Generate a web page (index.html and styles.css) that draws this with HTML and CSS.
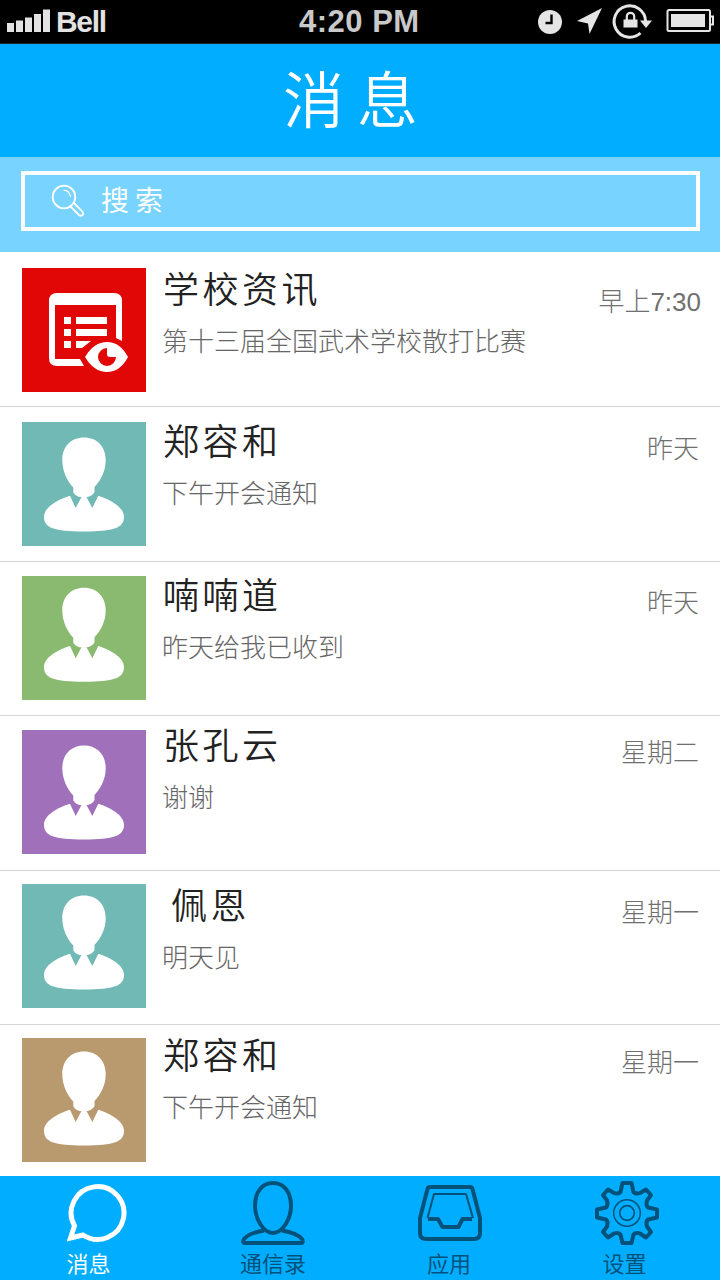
FILE: index.html
```html
<!DOCTYPE html>
<html lang="zh-CN">
<head>
<meta charset="utf-8">
<title>消息</title>
<link rel="stylesheet" href="styles.css">
</head>
<body>
<svg class="defs" width="0" height="0">
  <symbol id="person" viewBox="0 0 124 124" overflow="visible">
    <path fill="#fff" d="M62 15.500C49 15.500 40.300 24.500 40.300 38C40.300 49 45 59 51.300 65.500V70.500Q54 75 60.500 75.300H63.500Q70 75 72.500 70V65C79 58 83.700 49 83.700 38C83.700 24.500 75 15.500 62 15.500Z"/>
    <path fill="#fff" d="M48 73.700C36 77.500 22 85 22 94.700C22 106 32 109.400 62 109.400C92 109.400 102 106 102 94.700C102 85 88 77.500 76.300 73.700L70.300 86L64.500 75H59.500L53.700 86Z"/>
  </symbol>
</svg>
<div class="screen">
  <div class="status">
    <svg class="signal" width="46" height="26" viewBox="0 0 46 26" fill="#e2e2e2"><path d="M1 17h7v9H1zM10 14.500h7V26h-7zM19 11.500h7V26h-7zM28 8h7v18h-7zM37 3.500h7V26h-7z"/></svg>
    <span class="carrier">Bell</span>
    <span class="clock">4:20 PM</span>
    <svg class="indicators" width="190" height="43" viewBox="530 0 190 43">
      <circle cx="550" cy="22" r="12" fill="#e5e5e5"/>
      <path d="M551.500 14.500v8.500H545.500" fill="none" stroke="#000" stroke-width="2.400"/>
      <path d="M602 8L589.500 34L588 23.500L577 21Z" fill="#e5e5e5"/>
      <path d="M640.500 33A15.700 15.700 0 1 1 645.500 21" fill="none" stroke="#e5e5e5" stroke-width="3"/>
      <path d="M640 20.500h12l-6 7.500zM623.500 19.500h14v8h-14z" fill="#e5e5e5"/>
      <path d="M626.800 20.500v-4a3.700 3.700 0 0 1 7.400 0v4" fill="none" stroke="#e5e5e5" stroke-width="2.200"/>
      <rect x="667.500" y="10" width="42.500" height="21" rx="1.500" fill="none" stroke="#e5e5e5" stroke-width="2"/>
      <path d="M671 14h34v13h-34z" fill="#e5e5e5"/>
      <path d="M710 16.500h3v8h-3" fill="none" stroke="#e5e5e5" stroke-width="2"/>
    </svg>
  </div>
  <header class="header"><h1 class="title">消息</h1></header>
  <div class="search">
    <div class="search-box">
      <svg width="34" height="34" viewBox="0 0 34 34" fill="none" stroke="#fff" stroke-width="1.800"><circle cx="13" cy="13" r="11.300"/><path d="M12.500 6.200Q18.500 6.500 19.500 13" stroke-width="1.200"/><path d="M19.500 22.500L28 31Q30 32.600 31.600 31Q33 29.300 31.300 27.500L23 19"/></svg>
      <span class="search-text">搜索</span>
    </div>
  </div>
  <main class="list">
    <article class="row row-1">
      <svg class="avatar red" viewBox="0 0 124 124">
        <path fill="#fff" fill-rule="evenodd" d="M27 33Q27 25 35 25H92Q100 25 100 33V73L94 70V37H33V91H58L62 98H35Q27 98 27 90Z"/>
        <path fill="#fff" d="M42 49h7v7h-7zM54 49h31v7H54zM42 61h7v7h-7zM54 61h31v7H54zM42 73h7v7h-7zM54 73H69L60 80H54z"/>
        <path fill="#fff" d="M63 89Q72 74 85 74Q98 74 106 89Q98 104 85 104Q72 104 63 89Z"/>
        <path fill="#e20707" d="M85 80A9 9 0 1 0 94 89H88Q85 89 85 86Z"/>
      </svg>
      <div class="body"><h2 class="name">学校资讯</h2><p class="text">第十三届全国武术学校散打比赛</p></div>
      <time class="time">早上7:30</time>
    </article>
    <article class="row row-2">
      <svg class="avatar teal" viewBox="0 0 124 124"><use href="#person" width="124" height="124"/></svg>
      <div class="body"><h2 class="name">郑容和</h2><p class="text">下午开会通知</p></div>
      <time class="time">昨天</time>
    </article>
    <article class="row row-3">
      <svg class="avatar green" viewBox="0 3.700 124 124"><use href="#person" width="124" height="124"/></svg>
      <div class="body"><h2 class="name">喃喃道</h2><p class="text">昨天给我已收到</p></div>
      <time class="time">昨天</time>
    </article>
    <article class="row row-4">
      <svg class="avatar purple" viewBox="0 0 124 124"><use href="#person" width="124" height="124"/></svg>
      <div class="body"><h2 class="name">张孔云</h2><p class="text">谢谢</p></div>
      <time class="time">星期二</time>
    </article>
    <article class="row row-5">
      <svg class="avatar teal" viewBox="0 4 124 124"><use href="#person" width="124" height="124"/></svg>
      <div class="body"><h2 class="name indented">佩恩</h2><p class="text">明天见</p></div>
      <time class="time">星期一</time>
    </article>
    <article class="row row-6">
      <svg class="avatar tan" viewBox="0 2 124 124"><use href="#person" width="124" height="124"/></svg>
      <div class="body"><h2 class="name">郑容和</h2><p class="text">下午开会通知</p></div>
      <time class="time">星期一</time>
    </article>
  </main>
  <nav class="tabs">
    <a class="tab active">
      <svg width="80" height="66" viewBox="48.500 1180 80 66" fill="none" stroke="currentColor" stroke-width="5"><path d="M74 1225.800A26.400 26.400 0 1 1 82.500 1235L70 1238Z"/></svg>
      <span>消息</span>
    </a>
    <a class="tab">
      <svg width="64" height="66" viewBox="0 0 64 66" fill="none" stroke="currentColor" stroke-width="4" stroke-linejoin="round"><path d="M32 3C21 3 14 12 14 26C14 38 22 53 32 53C42 53 50 38 50 26C50 12 43 3 32 3Z"/><path d="M23 50.500Q8 53 3 59Q1 63 4 63H60Q63 63 61 59Q56 53 41 50.500"/></svg>
      <span>通信录</span>
    </a>
    <a class="tab">
      <svg class="inbox" width="64" height="66" viewBox="0 0 64 66" fill="none" stroke="currentColor" stroke-width="4" stroke-linejoin="round"><path d="M12 7H52Q54 7 54.500 9L62 38V53Q62 59 56 59H8Q2 59 2 53V38L9.500 9Q10 7 12 7Z"/><path d="M10 39H20L24.500 47H40.500L44.500 39H54"/><path d="M9.500 38L16 14H48L55 38" stroke-width="2"/></svg>
      <span>应用</span>
    </a>
    <a class="tab">
      <svg class="gear" width="64" height="66" viewBox="0 0 64 66" fill="none" stroke="currentColor" stroke-width="4" stroke-linejoin="round"><path d="M27.500 3H36.500L38.500 12Q41 14.500 45 13L51 9.500L56 15L52 20.500Q50.500 25 53 27.500L62 29.500V37.500L53 39.500Q50.500 42 52 46.500L56 52L51 57.500L45 53.500Q41 52 38.500 54.500L36.500 63H27.500L25.500 54.500Q23 52 19 53.500L13 57.500L8 52L12 46.500Q13.500 42 11 39.500L2 37.500V29.500L11 27.500Q13.500 25 12 20.500L8 15L13 9.500L19 13Q23 14.500 25.500 12Z"/><circle cx="32" cy="33" r="13.300" stroke-width="1.500"/><circle cx="32" cy="33" r="7.300" stroke-width="1.700"/></svg>
      <span>设置</span>
    </a>
  </nav>
</div>
</body>
</html>
```

FILE: styles.css
```css
* { box-sizing: border-box; }
body {
  margin: 0;
  font-family: "Liberation Sans", "Noto Sans CJK SC", sans-serif;
  background: #fff;
}
h1, h2, p { margin: 0; font-weight: 350; }
svg { display: block; flex: none; }
.defs { position: absolute; }
.screen { width: 720px; height: 1280px; display: flex; flex-direction: column; overflow: hidden; }

.status {
  height: 44px;
  flex: none;
  display: grid;
  grid-template-columns: 51px 248px 231px 190px;
  background: #000;
  border-bottom: 1px solid #222;
  color: #e2e2e2;
  font-weight: 700;
  line-height: 43px;
}
.signal { margin: 6px 0 0 6px; }
.carrier { padding-left: 5px; font-size: 30px; letter-spacing: -1.300px; }
.clock { font-size: 31px; letter-spacing: 0.500px; color: #c9c9c9; white-space: nowrap; }

.header { height: 113px; flex: none; background: #00adff; text-align: center; }
.title {
  font-family: "Noto Sans CJK SC", sans-serif;
  font-size: 61px;
  line-height: 106px;
  letter-spacing: 13px;
  padding-right: 6px;
  color: #fff;
}
.search { height: 95px; flex: none; padding: 14px 20px 21px 21px; background: #78d3ff; }
.search-box {
  height: 60px;
  border: 4px solid #fff;
  display: flex;
  gap: 16px;
  padding: 9px 0 0 26px;
}
.search-text { padding-top: 2px; font-size: 28px; line-height: 32px; letter-spacing: 6px; color: #fff; }

.list { flex: 1; }
.row {
  display: flex;
  height: 155px;
  padding: 0 21px 0 22px;
  border-bottom: 1px solid #d4d4d4;
}
.avatar { width: 124px; height: 124px; margin-top: 14px; }
.red { background: #e20707; }
.teal { background: #70b9b5; }
.green { background: #8aba70; }
.purple { background: #a070ba; }
.tan { background: #b99a6e; }
.body { flex: 1; margin-left: 17px; }
.name { padding-top: 1px; font-size: 36px; line-height: 40px; letter-spacing: 3.500px; color: #222; }
.indented { padding-left: 8px; }
.text { margin: 16px 0 0 -1px; font-size: 26px; line-height: 30px; font-weight: 300; color: #666; }
.time { font-size: 26px; line-height: 30px; font-weight: 300; color: #707070; }

.row-1 { padding-right: 19px; }
.row-1 .avatar { margin-top: 16px; }
.row-1 .body { padding-top: 18px; }
.row-1 .time { padding-top: 35px; }
.row-2 .avatar { margin-top: 15px; }
.row-2 .body { padding-top: 15px; }
.row-2 .time { padding-top: 27px; }
.row-3 { height: 154px; }
.row-3 .body { padding-top: 14px; }
.row-3 .time { padding-top: 26px; }
.row-4 .body { padding-top: 10px; }
.row-4 .time { padding-top: 22px; }
.row-5 { height: 154px; }
.row-5 .avatar { margin-top: 13px; }
.row-5 .body { padding-top: 15px; }
.row-5 .time { padding-top: 27px; }
.row-6 { height: 151px; border-bottom: 0; }
.row-6 .avatar { margin-top: 13px; }
.row-6 .body { padding-top: 11px; }
.row-6 .time { padding-top: 23px; }

.tabs {
  height: 104px;
  flex: none;
  display: grid;
  grid-template-columns: 177px 192px 160px 191px;
  padding-top: 4px;
  background: #00adff;
}
.tab {
  display: flex;
  flex-direction: column;
  align-items: center;
  gap: 5px;
  color: #00527a;
  font-size: 22px;
  line-height: 28px;
}
.active { color: #fff; }
.inbox { margin-left: 2px; }
.gear { margin-left: 5px; }
```
